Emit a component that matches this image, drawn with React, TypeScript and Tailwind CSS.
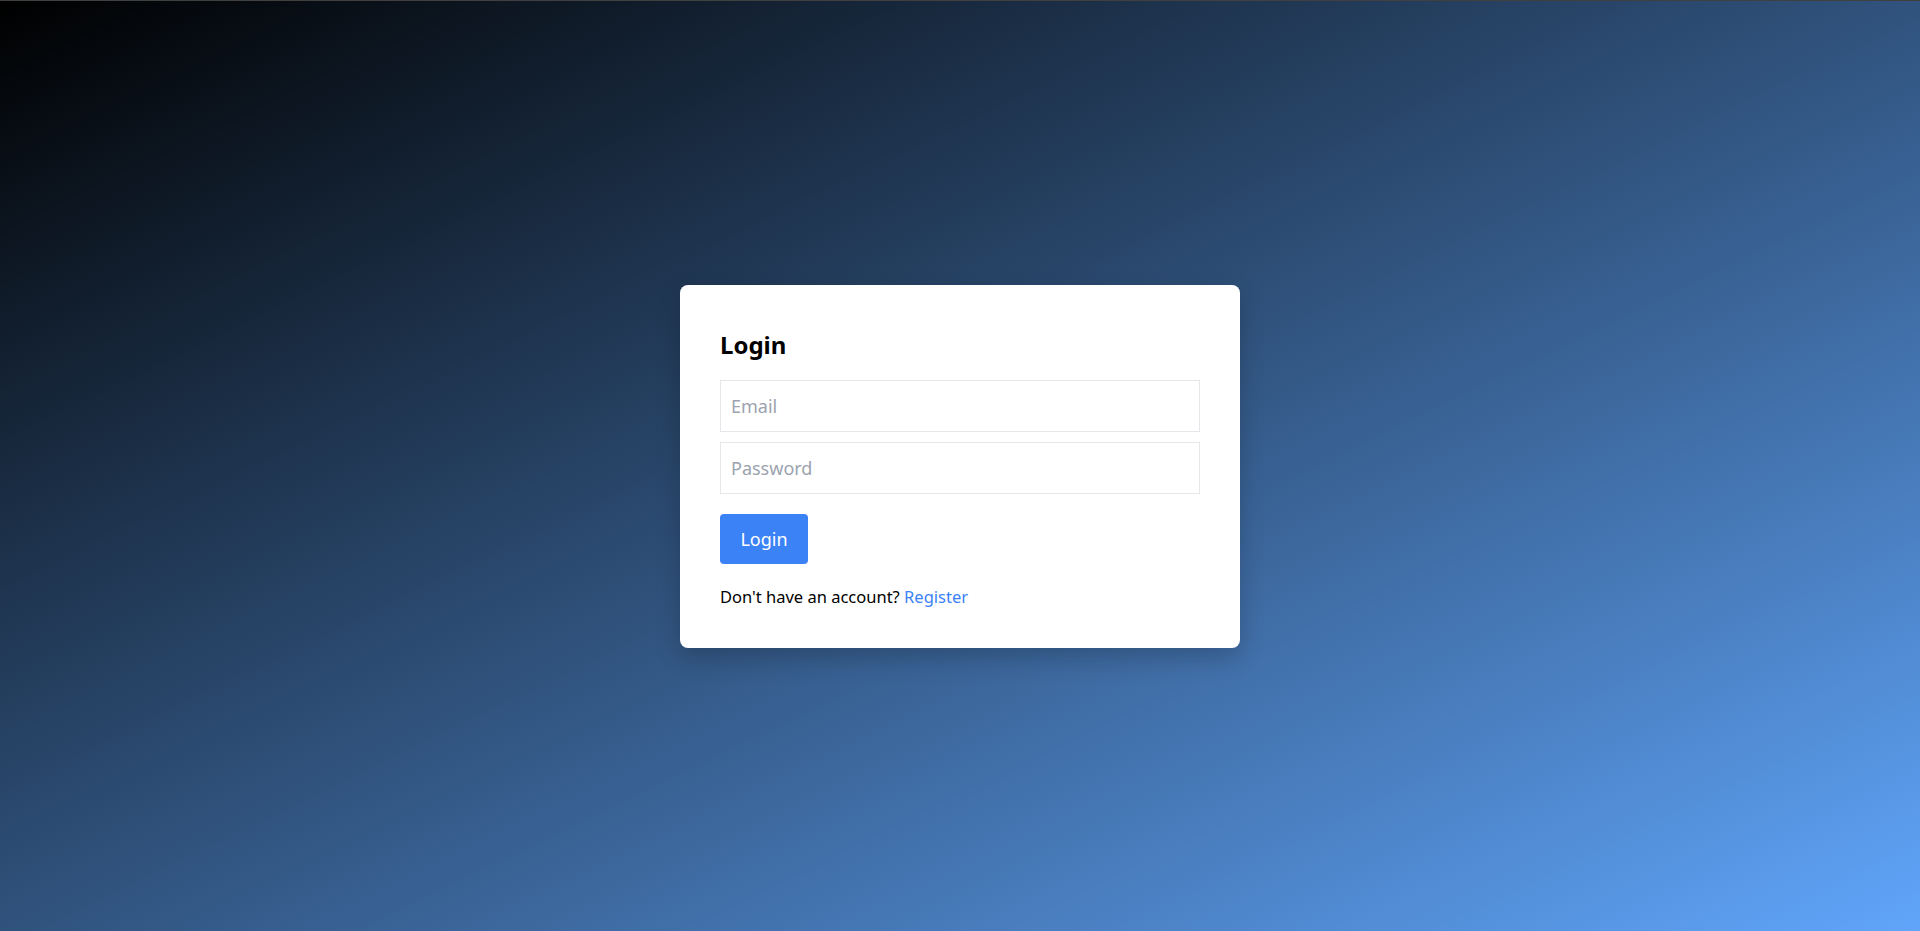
import { useState } from 'react';

export default function App() {
  const [email, setEmail] = useState('');
  const [password, setPassword] = useState('');

  const handleSubmit = (e: React.FormEvent) => {
    e.preventDefault();
  };

  return (
    <div
      className="min-h-screen flex items-center justify-center border-t border-[#404040] bg-[linear-gradient(to_bottom_right,#000000,#60a5fa)]"
      style={{ fontFamily: '"Noto Sans", "Open Sans", Arial, sans-serif' }}
    >
      <div className="w-[560px] bg-white rounded-lg shadow-[0_10px_25px_rgba(0,0,0,0.2)] p-10">
        <h2 className="text-2xl font-bold leading-8 text-black mt-1 mb-[19px]">Login</h2>

        <form onSubmit={handleSubmit}>
          <input
            type="email"
            value={email}
            onChange={(e) => setEmail(e.target.value)}
            placeholder="Email"
            className="block w-full h-[52px] px-[10px] border border-[#e5e7eb] text-lg text-black placeholder:text-[#9ca3af] outline-none mb-[10px]"
          />
          <input
            type="password"
            value={password}
            onChange={(e) => setPassword(e.target.value)}
            placeholder="Password"
            className="block w-full h-[52px] px-[10px] border border-[#e5e7eb] text-lg text-black placeholder:text-[#9ca3af] outline-none"
          />
          <button
            type="submit"
            className="mt-5 w-[88px] h-[50px] bg-[#3b82f6] text-white text-lg rounded"
          >
            Login
          </button>
        </form>

        <p className="mt-[21px] text-[16.5px] leading-[23px] text-black">
          Don't have an account?{' '}
          <a href="#" className="text-[#3b82f6]">
            Register
          </a>
        </p>
      </div>
    </div>
  );
}
